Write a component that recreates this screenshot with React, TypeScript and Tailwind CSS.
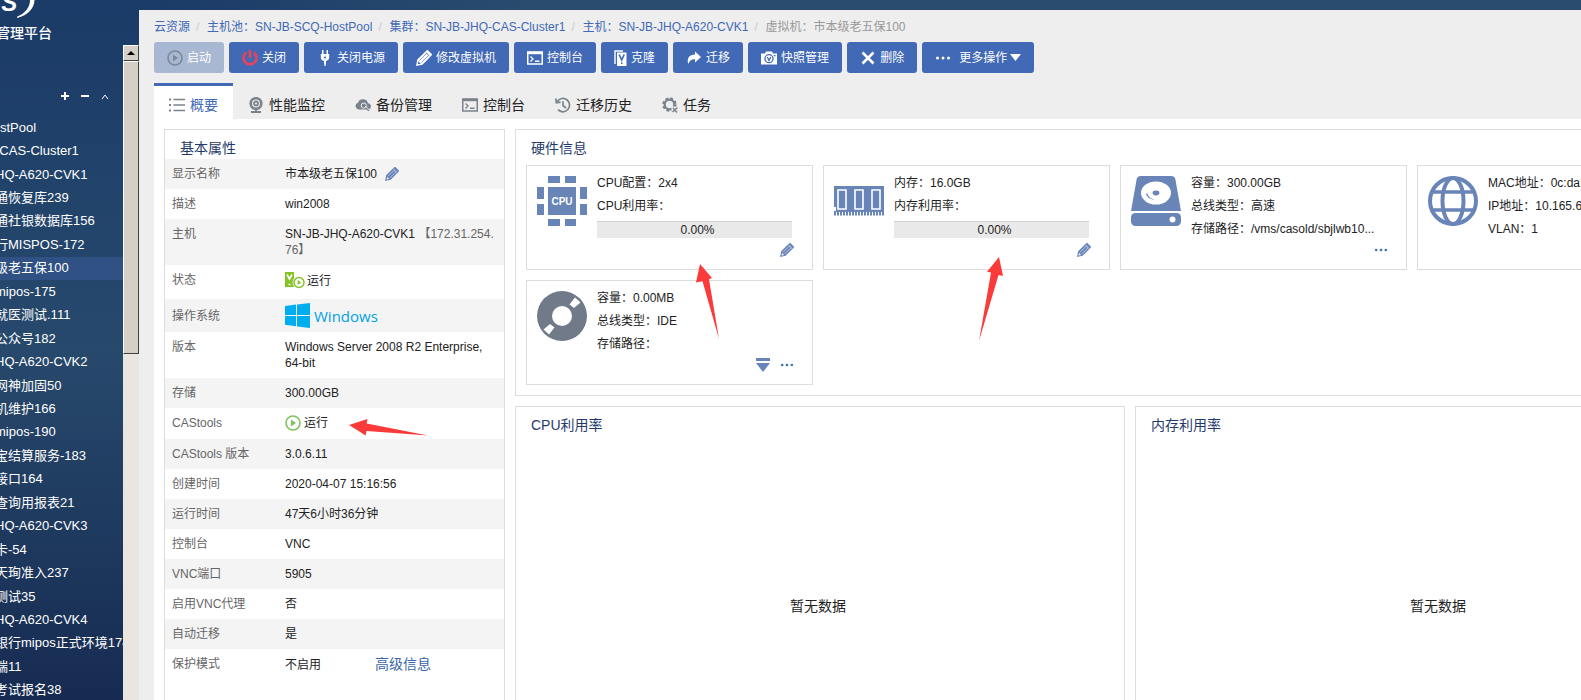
import type { ReactNode } from 'react';

const treeItems = [
  { name: 'stPool', pool: true },
  { name: '-CAS-Cluster1' },
  { name: 'HQ-A620-CVK1' },
  { name: '通恢复库239' },
  { name: '通社银数据库156' },
  { name: '行MISPOS-172' },
  { name: '级老五保100', active: true },
  { name: 'mipos-175' },
  { name: '就医测试.111' },
  { name: '公众号182' },
  { name: 'HQ-A620-CVK2' },
  { name: '网神加固50' },
  { name: '机维护166' },
  { name: 'mipos-190' },
  { name: '宝结算服务-183' },
  { name: '接口164' },
  { name: '查询用报表21' },
  { name: 'HQ-A620-CVK3' },
  { name: '卡-54' },
  { name: '天珣准入237' },
  { name: '测试35' },
  { name: 'HQ-A620-CVK4' },
  { name: '银行mipos正式环境174' },
  { name: '端11' },
  { name: '考试报名38' },
];

const crumbs = ['云资源', '主机池：SN-JB-SCQ-HostPool', '集群：SN-JB-JHQ-CAS-Cluster1', '主机：SN-JB-JHQ-A620-CVK1'];

/* ---------- icons ---------- */

function PlayIcon({ className }: { className: string }) {
  return (
    <svg viewBox="0 0 16 16" className={className}>
      <circle cx="8" cy="8" r="7" fill="none" stroke="currentColor" strokeWidth="1.6" />
      <path d="M6 4.6v6.8L11 8z" fill="currentColor" />
    </svg>
  );
}

function PowerIcon() {
  return (
    <svg viewBox="0 0 16 16" className="size-4 text-[#ea4256]" fill="none" stroke="currentColor" strokeWidth="2.6">
      <path d="M4.200 2.600a6.500 6.500 0 1 0 7.600 0M8 0v8" />
    </svg>
  );
}

function PlugIcon() {
  return (
    <svg viewBox="0 0 16 16" className="size-4" fill="currentColor">
      <path d="M5 0h1.5v4H5zM9.500 0H11v4H9.500zM3.800 4h8.400v3.200c0 2-1.300 3.400-3.200 3.800v1.800L8.600 16H7.400L7 12.800V11c-1.900-.4-3.200-1.800-3.200-3.800z" />
      <path d="M8.800 5L6.600 8h1.300l-.6 2 2.200-2.900H8.200z" fill="#4169b5" />
    </svg>
  );
}

function PencilIcon({ className, gap }: { className: string; gap: string }) {
  return (
    <svg viewBox="0 0 16 16" className={className} fill="currentColor">
      <path d="M1.300 9.500L10.500.4c.6-.5 1.200-.5 1.700 0l3.400 3.400c.5.500.5 1.100 0 1.700L6.500 14.700 0 16z" />
      <path d="M3.500 10.500l6.800-6.800M5.500 12.500l6.800-6.800" stroke={gap} strokeWidth=".6" />
      <path d="M9.900 2.500l3.600 3.600" stroke={gap} strokeWidth=".9" />
      <path d="M2.300 11.300l2.400 2.400-2.900.6z" fill={gap} />
    </svg>
  );
}

function ConsoleIcon() {
  return (
    <svg viewBox="0 0 16 16" className="size-4" fill="none" stroke="currentColor">
      <rect x=".75" y="2" width="14.500" height="12" strokeWidth="1.500" />
      <path d="M1 3h14" strokeWidth="2.400" />
      <path d="M3.500 6.500L6 9l-2.500 2.500M8 11.200h4.500" strokeWidth="1.400" />
    </svg>
  );
}

function CloneIcon() {
  return (
    <svg viewBox="0 0 13 16" className="h-4 w-[13px]">
      <path d="M1 14V1h8" fill="none" stroke="currentColor" strokeWidth="1.400" />
      <rect x="3" y="2.500" width="9.500" height="13.500" fill="currentColor" />
      <path d="M5.200 4.500L7.700 10l2.500-5.500" fill="none" stroke="#4169b5" strokeWidth="1.700" />
      <rect x="7" y="12.500" width="1.500" height="1.500" fill="#4169b5" />
    </svg>
  );
}

function ShareIcon() {
  return (
    <svg viewBox="0 0 16 16" className="size-4" fill="currentColor">
      <path d="M9 1.500L15 7l-6 5.500V9.300C5.500 9 3.500 10.500 2.300 14 .5 8 3.500 4.600 9 4.500z" />
    </svg>
  );
}

function CameraIcon() {
  return (
    <svg viewBox="0 0 16 16" className="size-4">
      <path d="M0 3.500h4l1-2h6l1 2h4v11H0z" fill="currentColor" />
      <circle cx="8" cy="8.700" r="4" fill="none" stroke="#4169b5" strokeWidth="1.300" />
      <path d="M6.300 7L8 10.500 9.700 7" fill="none" stroke="#4169b5" strokeWidth="1.300" />
      <rect x="12.800" y="5" width="1.700" height="1.300" fill="#4169b5" />
    </svg>
  );
}

function CloseIcon() {
  return (
    <svg viewBox="0 0 16 16" className="size-4" stroke="currentColor" strokeWidth="2.600">
      <path d="M2.500 2.500l11 11M13.500 2.500l-11 11" />
    </svg>
  );
}

function DotsIcon({ className }: { className: string }) {
  return (
    <svg viewBox="0 0 16 16" className={className} fill="currentColor">
      <circle cx="2.500" cy="8" r="1.500" />
      <circle cx="8" cy="8" r="1.500" />
      <circle cx="13.500" cy="8" r="1.500" />
    </svg>
  );
}

function ListIcon() {
  return (
    <svg viewBox="0 0 16 16" className="size-4" fill="#7b828c">
      <path d="M0 1.500h2v2H0zM0 7h2v2H0zM0 12.500h2v2H0zM4.500 1.800H16v1.400H4.500zM4.500 7.300H16v1.400H4.500zM4.500 12.800H16v1.400H4.500z" />
    </svg>
  );
}

function WebcamIcon() {
  return (
    <svg viewBox="0 0 16 16" className="size-4" fill="none" stroke="#7b828c">
      <circle cx="8" cy="6.500" r="5.300" strokeWidth="2.600" />
      <circle cx="8" cy="6.500" r="2" strokeWidth="1.800" />
      <path d="M8 12.500v2M3 15h10" strokeWidth="1.900" />
    </svg>
  );
}

function CloudIcon() {
  return (
    <svg viewBox="0 0 16 16" className="size-4">
      <path d="M3.500 12.500A3.500 3.500 0 0 1 2.900 5.700 5.300 5.300 0 0 1 13 6.200a3.200 3.200 0 0 1 .5 6.300z" fill="#7b828c" />
      <circle cx="8.800" cy="8.600" r="2.600" fill="none" stroke="#eee" strokeWidth="1" />
      <path d="M10.800 10.600l3.200 3.200" stroke="#7b828c" strokeWidth="1.600" />
      <path d="M10.500 9.500l3.500 3" stroke="#eee" strokeWidth="1" />
    </svg>
  );
}

function HistoryIcon() {
  return (
    <svg viewBox="0 0 16 16" className="size-4" fill="none" stroke="#7b828c" strokeWidth="1.700">
      <path d="M2.200 4.500A6.700 6.700 0 1 1 3 12.700" />
      <path d="M.8 1.500l.6 4.200 4.200-.5" />
      <path d="M8 4.200v4.300l3 2.500" />
    </svg>
  );
}

function GearIcon() {
  return (
    <svg viewBox="0 0 16 16" className="size-4" fill="none" stroke="#7b828c">
      <circle cx="7.500" cy="7.500" r="6.200" strokeWidth="2" strokeDasharray="2.900 1.970" />
      <circle cx="7.500" cy="7.500" r="4.800" strokeWidth="2.200" />
      <path d="M9.500 9.500h6.500v6.500H9.500z" fill="#eee" stroke="none" />
      <path d="M11 11l4 4.500M15.500 10.500L10.500 15" strokeWidth="1.500" />
    </svg>
  );
}

function CpuIcon() {
  return (
    <svg viewBox="0 0 50 50" className="size-[50px] shrink-0" fill="#6985b8">
      <path d="M11 0h12v7H11zM28 0h11v7H28zM11 43h12v7H11zM28 43h11v7H28zM0 11h7v12H0zM0 28h7v11H0zM43 11h7v12h-7zM43 28h7v11h-7zM11 11h28v28H11z" />
      <text x="25" y="29" textAnchor="middle" fontSize="10" fontWeight="700" fontFamily="Liberation Sans, sans-serif" fill="#fff">CPU</text>
    </svg>
  );
}

function MemoryIcon() {
  return (
    <svg viewBox="0 0 50 50" className="size-[50px] shrink-0">
      <path d="M0 10h50v26H0z" fill="#6985b8" />
      <path d="M0 31h2v4H0z" fill="#fff" />
      <g fill="none" stroke="#fff" strokeWidth="1.600">
        <path d="M4 14h8v19H4zM21 14h8v19h-8zM38 14h8v19h-8z" />
      </g>
      <path d="M0 37.800h50" stroke="#6985b8" strokeWidth="3.600" strokeDasharray="2 1" />
    </svg>
  );
}

function DiskIcon() {
  return (
    <svg viewBox="0 0 50 50" className="size-[50px] shrink-0">
      <path d="M10 0h30c3 0 4 1.500 4.500 4L50 35H0L5.500 4C6 1.500 7 0 10 0z" fill="#6985b8" />
      <ellipse cx="25" cy="17" rx="15" ry="11.500" fill="#fff" />
      <ellipse cx="25" cy="17" rx="3.400" ry="2.400" fill="#6985b8" />
      <path d="M15 17.500c.5 4 4.500 6.200 9 6-4-.9-7-2.500-7.500-6z" fill="#6985b8" />
      <rect y="37" width="50" height="13" rx="4.500" fill="#6985b8" />
      <circle cx="41.500" cy="43.500" r="3" fill="#fff" />
    </svg>
  );
}

function GlobeIcon() {
  return (
    <svg viewBox="0 0 50 50" className="size-[50px] shrink-0" fill="none" stroke="#6985b8" strokeWidth="4">
      <circle cx="25" cy="25" r="23" />
      <ellipse cx="25" cy="25" rx="10.500" ry="23" />
      <path d="M5 16h40M5 34h40" strokeWidth="3.600" />
    </svg>
  );
}

function CdIcon() {
  return (
    <svg viewBox="0 0 50 50" className="size-[50px] shrink-0">
      <circle cx="25" cy="25" r="25" fill="#717a88" />
      <circle cx="25" cy="25" r="10" fill="#fff" />
      <path d="M38 6.500l5.500 5-6.500 5.500-4.500-3.500zM12 43.500l-5.500-5 6.500-5.500 4.500 3.500z" fill="#fff" />
    </svg>
  );
}

function VmRunningIcon() {
  return (
    <svg viewBox="0 0 20 17" className="h-[17px] w-5">
      <path d="M0 0h9v15H0z" fill="#84c225" />
      <path d="M2 2.500L4.500 7 7 2.500M3.500 12.500h2" fill="none" stroke="#fff" strokeWidth="1.600" />
      <circle cx="14" cy="10.500" r="6.500" fill="#fff" />
      <circle cx="14" cy="10.500" r="5" fill="none" stroke="#84c225" strokeWidth="1.500" />
      <path d="M12.600 8v5l3.600-2.500z" fill="#84c225" />
    </svg>
  );
}

function WindowsIcon() {
  return (
    <svg viewBox="0 0 25 25" className="size-[25px]" fill="#00adef">
      <path d="M0 3L11 1.500V12H0zM12 1.400L25 0v12H12zM0 13h11v10.300L0 21.800zM12 13h13v12l-13-1.600z" />
    </svg>
  );
}

/* ---------- pieces ---------- */

const toolbar: { label: string; icon: ReactNode }[] = [
  { label: '关闭', icon: <PowerIcon /> },
  { label: '关闭电源', icon: <PlugIcon /> },
  { label: '修改虚拟机', icon: <PencilIcon className="size-4" gap="#4169b5" /> },
  { label: '控制台', icon: <ConsoleIcon /> },
  { label: '克隆', icon: <CloneIcon /> },
  { label: '迁移', icon: <ShareIcon /> },
  { label: '快照管理', icon: <CameraIcon /> },
  { label: '删除', icon: <CloseIcon /> },
];

const tabs: { label: string; icon: ReactNode }[] = [
  { label: '性能监控', icon: <WebcamIcon /> },
  { label: '备份管理', icon: <CloudIcon /> },
  { label: '控制台', icon: <span className="text-[#7b828c]"><ConsoleIcon /></span> },
  { label: '迁移历史', icon: <HistoryIcon /> },
  { label: '任务', icon: <GearIcon /> },
];

function Sidebar() {
  return (
    <aside className="flex w-[139px] shrink-0 flex-col overflow-hidden text-white">
      <div className="h-[45px] shrink-0">
        <div className="flex h-[22px] items-start">
          <span className="-mt-[9px] -ml-4 text-2xl leading-6 font-bold italic">AS</span>
          <svg viewBox="0 0 18 18" className="h-[18px] w-[18px]" fill="#fff">
            <path d="M13 0h4.500C17.500 8 11 15.500 0 18v-1.200C8.500 13 13 7.500 13 0z" />
          </svg>
        </div>
        <div className="-ml-1 text-sm leading-[22px] font-medium">管理平台</div>
      </div>
      <div className="flex min-h-0 flex-1">
        <nav className="min-w-0 flex-1">
          <div className="flex h-[71px] items-end justify-end gap-1 pr-[10px] pb-[12px]">
            <button aria-label="展开" className="flex size-4 items-center justify-center">
              <svg viewBox="0 0 8 8" className="size-2" stroke="#fff" strokeWidth="2"><path d="M0 4h8M4 0v8" /></svg>
            </button>
            <button aria-label="折叠" className="flex size-4 items-center justify-center">
              <svg viewBox="0 0 8 8" className="size-2" stroke="#fff" strokeWidth="2"><path d="M0 4h8" /></svg>
            </button>
            <button aria-label="收起" className="flex size-4 items-center justify-center">
              <svg viewBox="0 0 8 8" className="size-2" stroke="#fff" fill="none"><path d="M1 7l3-4 3 4" /></svg>
            </button>
          </div>
          <ul className="grid h-[586px] auto-rows-fr text-[13px]">
            {treeItems.map((item) => (
              <li key={item.name} className={item.active ? 'flex items-center overflow-hidden bg-[#2f5184]' : 'flex items-center overflow-hidden'}>
                <a href="#" className={item.pool ? 'leading-5 whitespace-nowrap' : '-ml-[5px] leading-5 whitespace-nowrap'}>
                  {item.name}
                </a>
              </li>
            ))}
          </ul>
        </nav>
        {/* scrollbar */}
        <div className="flex w-4 flex-col bg-[#e9e6e0]">
          <button aria-label="向上滚动" className="flex h-4 items-center justify-center border border-t-white border-r-[#404040] border-b-[#404040] border-l-white bg-[#d4d0c8]">
            <svg viewBox="0 0 8 4" className="h-1 w-2"><path d="M0 4l4-4 4 4z" /></svg>
          </button>
          <div className="h-[293px] border border-t-white border-r-[#404040] border-b-[#404040] border-l-white bg-[#d4d0c8]" />
        </div>
      </div>
    </aside>
  );
}

function Row({ label, height = 'h-[30px]', children }: { label: string; height?: string; children: ReactNode }) {
  return (
    <tr className={`${height} odd:bg-[#f4f4f4]`}>
      <th scope="row" className="w-[120px] py-[7px] pl-[7px] text-left align-top font-normal text-[#666]">{label}</th>
      <td className="py-[7px] pr-2 align-top text-[#222]">{children}</td>
    </tr>
  );
}

function Properties() {
  return (
    <section className="w-[341px] shrink-0 border border-[#ddd]">
      <h2 className="h-[29px] pt-2 pl-[15px] text-sm leading-5 text-[#1f3a6b]">基本属性</h2>
      <table className="w-full table-fixed text-xs leading-4">
        <tbody>
          <Row label="显示名称">
            <div className="flex items-center gap-2">
              市本级老五保100
              <button aria-label="修改名称"><PencilIcon className="size-[14px] text-[#6985b8]" gap="#f4f4f4" /></button>
            </div>
          </Row>
          <Row label="描述">win2008</Row>
          <Row label="主机" height="h-[46px]">
            <span className="break-all">SN-JB-JHQ-A620-CVK1 <span className="text-[#666]">【172.31.254.76】</span></span>
          </Row>
          <Row label="状态" height="h-[34px]">
            <div className="flex items-center gap-[2px]"><VmRunningIcon />运行</div>
          </Row>
          <tr className="h-[33px] bg-[#f4f4f4]">
            <th scope="row" className="pl-[7px] text-left font-normal text-[#666]">操作系统</th>
            <td>
              <div className="flex items-center gap-1 font-['Open_Sans',sans-serif] text-[15px] text-[#00a2e4]"><WindowsIcon />Windows</div>
            </td>
          </tr>
          <Row label="版本" height="h-[46px]">Windows Server 2008 R2 Enterprise, 64-bit</Row>
          <Row label="存储">300.00GB</Row>
          <Row label="CAStools" height="h-[31px]">
            <div className="flex items-center gap-[3px]"><PlayIcon className="size-4 text-[#7cc35c]" />运行</div>
          </Row>
          <Row label="CAStools 版本">3.0.6.11</Row>
          <Row label="创建时间">2020-04-07 15:16:56</Row>
          <Row label="运行时间">47天6小时36分钟</Row>
          <Row label="控制台">VNC</Row>
          <Row label="VNC端口">5905</Row>
          <Row label="启用VNC代理">否</Row>
          <Row label="自动迁移">是</Row>
          <Row label="保护模式">
            不启用<a href="#" className="ml-[54px] text-sm leading-4 text-[#3a66a8]">高级信息</a>
          </Row>
        </tbody>
      </table>
    </section>
  );
}

function HardwareCard({ icon, lines, usage, actions }: { icon: ReactNode; lines: string[]; usage?: string; actions?: ReactNode }) {
  return (
    <div className="relative flex h-[105px] w-[287px] gap-[10px] border border-[#ddd] px-[10px] pt-[6px]">
      <div className="pt-1">{icon}</div>
      <div className="min-w-0 flex-1 pr-[10px]">
        {lines.map((line) => (
          <p key={line} className="truncate text-xs leading-[23px] text-[#222]">{line}</p>
        ))}
        {usage && (
          <div role="progressbar" aria-valuenow={0} aria-label="利用率" className="mt-[3px] h-[17px] border-t border-[#d2d2d2] bg-[#e9e9e9] pl-[6px] text-center text-xs leading-4 text-[#222]">
            {usage}
          </div>
        )}
      </div>
      <div className="absolute right-[18px] bottom-3 flex items-center gap-[10px] text-[#6985b8]">{actions}</div>
    </div>
  );
}

function EmptyChart({ title }: { title: string }) {
  return (
    <section className="border border-[#ddd]">
      <h2 className="h-[39px] pt-2 pl-[15px] text-sm leading-5 text-[#1f3a6b]">{title}</h2>
      <div className="flex h-80 items-center justify-center pr-1 text-sm text-[#222]">暂无数据</div>
    </section>
  );
}

export default function App() {
  const edit = <button aria-label="修改"><PencilIcon className="block size-[14px]" gap="#fff" /></button>;
  const more = <button aria-label="更多"><DotsIcon className="block size-[14px] text-[#3a76ad]" /></button>;

  return (
    <div className="flex h-screen overflow-hidden bg-linear-to-b from-[#1b3b68] via-[#27496c] to-[#172b52] font-['Liberation_Sans','Noto_Sans_CJK_SC',sans-serif]">
      <Sidebar />
      <div className="min-w-[1616px] flex-1">
        <div className="h-[10px] bg-linear-to-r from-[#1b3b68] to-[#2a4c6e] to-25%" />
        <main className="min-h-screen bg-[#eee] pl-[15px]">
          <nav className="flex h-8 items-center pt-[2px] text-xs">
            {crumbs.map((crumb) => (
              <span key={crumb} className="flex">
                <a href="#" className="text-[#4169b5]">{crumb}</a>
                <span className="w-[17px] pl-[6px] text-[#ccc]">/</span>
              </span>
            ))}
            <span className="text-[#999]">虚拟机：市本级老五保100</span>
          </nav>

          <div className="flex gap-[5px] text-xs text-white">
            <button disabled className="flex h-[31px] items-center gap-1 rounded-[3px] bg-[#a9b8d2] px-[13px]">
              <PlayIcon className="size-4 text-[#7c8797]" />启动
            </button>
            {toolbar.map((item) => (
              <button key={item.label} className="flex h-[31px] items-center gap-1 rounded-[3px] bg-[#4169b5] px-[13px]">
                {item.icon}{item.label}
              </button>
            ))}
            <button className="flex h-[31px] items-center rounded-[3px] bg-[#4169b5] px-[13px]">
              <DotsIcon className="mr-2 size-4" />更多操作
              <svg viewBox="0 0 11 7" className="ml-[3px] h-[7px] w-[11px]" fill="#fff"><path d="M0 0h11L5.500 7z" /></svg>
            </button>
          </div>

          <div className="mt-[10px] flex text-sm text-[#222]">
            <button className="flex h-9 items-center gap-[5px] border-t-[3px] border-[#4169b5] bg-white px-[15px] pt-1 text-[#4169b5]">
              <ListIcon />概要
            </button>
            {tabs.map((tab) => (
              <button key={tab.label} className="flex h-9 items-center gap-[5px] px-[15px] pt-2">
                {tab.icon}{tab.label}
              </button>
            ))}
          </div>

          <div className="relative flex min-h-screen gap-[10px] bg-white p-[10px]">
            <Properties />
            <div className="min-w-0 flex-1">
              <section className="border border-[#ddd] px-[10px] pb-[10px]">
                <h2 className="h-[35px] pt-2 pl-[5px] text-sm leading-5 text-[#1f3a6b]">硬件信息</h2>
                <div className="flex flex-wrap gap-[10px]">
                  <HardwareCard icon={<CpuIcon />} lines={['CPU配置：2x4', 'CPU利用率：']} usage="0.00%" actions={edit} />
                  <HardwareCard icon={<MemoryIcon />} lines={['内存：16.0GB', '内存利用率：']} usage="0.00%" actions={edit} />
                  <HardwareCard icon={<DiskIcon />} lines={['容量：300.00GB', '总线类型：高速', '存储路径：/vms/casold/sbjlwb10...']} actions={more} />
                  <HardwareCard icon={<GlobeIcon />} lines={['MAC地址：0c:da:41:1d:5e', 'IP地址：10.165.6.100', 'VLAN：1']} />
                  <HardwareCard
                    icon={<CdIcon />}
                    lines={['容量：0.00MB', '总线类型：IDE', '存储路径：']}
                    actions={
                      <>
                        <button aria-label="卸载">
                          <svg viewBox="0 0 14 14" className="block size-[14px]" fill="currentColor"><path d="M0 0h14v3H0zM0 5h14l-7 9z" /></svg>
                        </button>
                        {more}
                      </>
                    }
                  />
                </div>
              </section>
              <div className="mt-[10px] grid grid-cols-2 gap-[10px]">
                <EmptyChart title="CPU利用率" />
                <EmptyChart title="内存利用率" />
              </div>
            </div>

            {/* hand-drawn marker arrows */}
            <svg viewBox="0 0 24 76" className="absolute top-[145px] left-[541px] h-[76px] w-6" fill="#fb3a3a">
              <path d="M5 0l12 14-3 1.200L24 75 7.500 17.200 1 18.500z" />
            </svg>
            <svg viewBox="0 0 26 85" className="absolute top-[138px] left-[824px] h-[85px] w-[26px]" fill="#fb3a3a">
              <path d="M21 0l4 19-4.500-1L1 84 13 15.500l-4-.8z" />
            </svg>
            <svg viewBox="0 0 79 17" className="absolute top-[300px] left-[195px] h-[17px] w-[79px]" fill="#fb3a3a">
              <path d="M0 6L18.500 0l-.8 4.500L79 16.500 17.500 12l-.8 4.500z" />
            </svg>
          </div>
        </main>
      </div>
    </div>
  );
}
